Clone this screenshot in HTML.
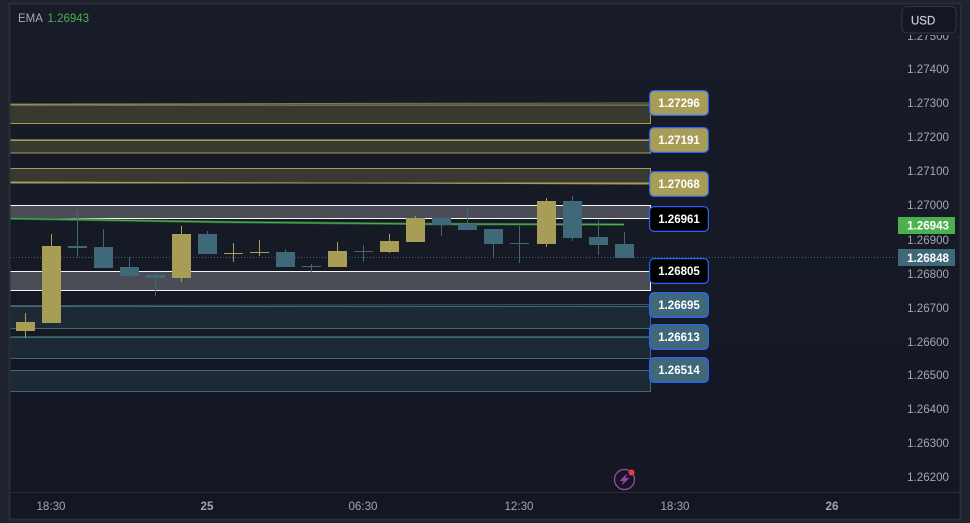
<!DOCTYPE html>
<html><head><meta charset="utf-8">
<style>
html,body{margin:0;padding:0;width:970px;height:523px;overflow:hidden;background:#1e232e}
svg{display:block}
text{font-family:"Liberation Sans",sans-serif}
</style></head><body>
<svg width="970" height="523" viewBox="0 0 970 523" xmlns="http://www.w3.org/2000/svg">
<defs><linearGradient id="bg" x1="0" y1="0" x2="0" y2="1"><stop offset="0" stop-color="#181c28"/><stop offset="1" stop-color="#131722"/></linearGradient></defs>
<rect width="970" height="523" fill="#1e232e"/>
<rect x="9.5" y="3.5" width="951" height="516" fill="url(#bg)"/>
<line x1="11" y1="492.5" x2="960" y2="492.5" stroke="#2a2e39"/>

<!-- yellow zones -->
<g fill="#383a32" stroke="#a89d57" stroke-width="1">
<rect x="4" y="105" width="646.5" height="18.5"/>
<rect x="4" y="140.5" width="646.5" height="12.5"/>
<rect x="4" y="168.5" width="646.5" height="14.5"/>
</g>
<line x1="10" y1="104" x2="650" y2="103" stroke="#7d7a55"/>
<line x1="10" y1="139.5" x2="650" y2="139.5" stroke="#6e6c50"/>
<line x1="10" y1="182" x2="650" y2="184" stroke="#a89d57"/>
<!-- white zones -->
<g fill="#4a4c56" stroke="#f4f4f4" stroke-width="1">
<rect x="4" y="205.5" width="646.5" height="13"/>
<rect x="4" y="271.5" width="646.5" height="19"/>
</g>
<!-- teal zones -->
<g fill="#1d2935" stroke="#3f6879" stroke-width="1">
<rect x="4" y="306.5" width="646.5" height="22"/>
<rect x="4" y="337.5" width="646.5" height="21"/>
<rect x="4" y="370.5" width="646.5" height="21"/>
</g>
<line x1="10" y1="305.5" x2="650" y2="304.5" stroke="#3a5a69"/>
<line x1="10" y1="336.5" x2="650" y2="336.5" stroke="#34505e"/>

<!-- dotted last price -->
<line x1="10" y1="257.5" x2="897" y2="257.5" stroke="#3f6879" stroke-width="1" stroke-dasharray="1 2"/>

<!-- EMA -->
<polyline points="10,218.5 220,222 430,224 624,224.5" fill="none" stroke="#2f6a33" stroke-width="2.4"/>
<polyline points="10,218.5 220,222 430,224 624,224.5" fill="none" stroke="#4caf50" stroke-width="1"/>

<!-- wicks -->
<g stroke="#a89d57" stroke-width="1">
<line x1="25.5" y1="313" x2="25.5" y2="338"/>
<line x1="51.5" y1="234" x2="51.5" y2="323"/>
<line x1="181.5" y1="226" x2="181.5" y2="282"/>
<line x1="233.5" y1="243" x2="233.5" y2="262"/>
<line x1="259.5" y1="240" x2="259.5" y2="256"/>
<line x1="337.5" y1="242" x2="337.5" y2="267"/>
<line x1="389.5" y1="234" x2="389.5" y2="253"/>
<line x1="415.5" y1="216" x2="415.5" y2="242"/>
<line x1="546.5" y1="198" x2="546.5" y2="247"/>
</g>
<g stroke="#3f6879" stroke-width="1">
<line x1="77.5" y1="211" x2="77.5" y2="257"/>
<line x1="103.5" y1="229" x2="103.5" y2="268"/>
<line x1="129.5" y1="257" x2="129.5" y2="278"/>
<line x1="155.5" y1="274" x2="155.5" y2="296"/>
<line x1="207.5" y1="231" x2="207.5" y2="254"/>
<line x1="285.5" y1="249" x2="285.5" y2="267"/>
<line x1="311.5" y1="264" x2="311.5" y2="272"/>
<line x1="363.5" y1="245" x2="363.5" y2="262"/>
<line x1="441.5" y1="216" x2="441.5" y2="236"/>
<line x1="467.5" y1="208" x2="467.5" y2="230"/>
<line x1="493.5" y1="229" x2="493.5" y2="258"/>
<line x1="519.5" y1="226" x2="519.5" y2="263"/>
<line x1="572.5" y1="196" x2="572.5" y2="241"/>
<line x1="598.5" y1="220" x2="598.5" y2="255"/>
<line x1="624.5" y1="232" x2="624.5" y2="258"/>
</g>
<!-- bodies -->
<g fill="#a89d57">
<rect x="16" y="322" width="19" height="9"/>
<rect x="42" y="246" width="19" height="77"/>
<rect x="172" y="234" width="19" height="44"/>
<rect x="224" y="253" width="19" height="1"/>
<rect x="250" y="252" width="19" height="1"/>
<rect x="328" y="251" width="19" height="16"/>
<rect x="380" y="241" width="19" height="11"/>
<rect x="406" y="218" width="19" height="24"/>
<rect x="537" y="201" width="19" height="43"/>
</g>
<g fill="#3f6879">
<rect x="68" y="246" width="19" height="2"/>
<rect x="94" y="247" width="19" height="21"/>
<rect x="120" y="267" width="19" height="9"/>
<rect x="146" y="275" width="19" height="3"/>
<rect x="198" y="234" width="19" height="20"/>
<rect x="276" y="252" width="19" height="15"/>
<rect x="302" y="266" width="19" height="1"/>
<rect x="354" y="251" width="19" height="1"/>
<rect x="432" y="218" width="19" height="7"/>
<rect x="458" y="224" width="19" height="6"/>
<rect x="484" y="229" width="19" height="15"/>
<rect x="510" y="243" width="19" height="1"/>
<rect x="563" y="201" width="19" height="37"/>
<rect x="589" y="237" width="19" height="8"/>
<rect x="615" y="244" width="19" height="14"/>
</g>

<!-- outer margin + frame above the zones -->
<rect x="0" y="0" width="9" height="523" fill="#1e232e"/>
<rect x="9.5" y="3.5" width="951" height="516" fill="none" stroke="#2a2e39" stroke-width="2"/>

<!-- level labels -->
<g stroke="#2962ff" stroke-width="1.2">
<rect x="649.6" y="90.6" width="58.8" height="24.8" rx="4.5" fill="#a89d57"/>
<rect x="649.6" y="127.6" width="58.8" height="24.8" rx="4.5" fill="#a89d57"/>
<rect x="649.6" y="171.6" width="58.8" height="24.8" rx="4.5" fill="#a89d57"/>
<rect x="649.6" y="206.6" width="58.8" height="24.8" rx="4.5" fill="#000"/>
<rect x="649.6" y="258.6" width="58.8" height="24.8" rx="4.5" fill="#000"/>
<rect x="649.6" y="292.6" width="58.8" height="24.8" rx="4.5" fill="#3f6879"/>
<rect x="649.6" y="324.6" width="58.8" height="24.8" rx="4.5" fill="#3f6879"/>
<rect x="649.6" y="357.6" width="58.8" height="24.8" rx="4.5" fill="#3f6879"/>
</g>
<g fill="#fff" font-size="11.5" font-weight="700" text-anchor="middle">
<text x="679" y="107">1.27296</text>
<text x="679" y="144">1.27191</text>
<text x="679" y="188">1.27068</text>
<text x="679" y="223">1.26961</text>
<text x="679" y="275">1.26805</text>
<text x="679" y="309">1.26695</text>
<text x="679" y="341">1.26613</text>
<text x="679" y="374">1.26514</text>
</g>

<!-- price axis -->
<g fill="#a3a6af" font-size="11.6" text-anchor="end">
<text x="949" y="40">1.27500</text>
<text x="949" y="73">1.27400</text>
<text x="949" y="107">1.27300</text>
<text x="949" y="141">1.27200</text>
<text x="949" y="175">1.27100</text>
<text x="949" y="209">1.27000</text>
<text x="949" y="244">1.26900</text>
<text x="949" y="278">1.26800</text>
<text x="949" y="312">1.26700</text>
<text x="949" y="346">1.26600</text>
<text x="949" y="379">1.26500</text>
<text x="949" y="413">1.26400</text>
<text x="949" y="447">1.26300</text>
<text x="949" y="481">1.26200</text>
</g>
<rect x="898" y="217" width="57" height="17" fill="#4caf50"/>
<text x="949" y="229.5" fill="#fff" font-size="11.6" font-weight="700" text-anchor="end">1.26943</text>
<rect x="898" y="249" width="57" height="17" fill="#3f6879"/>
<text x="949" y="262" fill="#fff" font-size="11.6" font-weight="700" text-anchor="end">1.26848</text>

<!-- USD -->
<rect x="895" y="5" width="65" height="30" fill="#171b26"/>
<rect x="902" y="6.5" width="54" height="26.5" rx="5" fill="#131722" stroke="#2e323d" stroke-width="1.2"/>
<text x="911" y="24.5" fill="#c9cbd2" stroke="#c9cbd2" stroke-width="0.2" font-size="11.5">USD</text>

<!-- legend -->
<text x="18" y="22" fill="#a8abb4" font-size="11.5">EMA</text>
<text x="47.5" y="22" fill="#4caf50" font-size="11.5">1.26943</text>

<!-- time axis -->
<g fill="#a3a6af" font-size="11.6" text-anchor="middle">
<text x="51" y="510">18:30</text>
<text x="207" y="510" font-weight="700">25</text>
<text x="363" y="510">06:30</text>
<text x="519" y="510">12:30</text>
<text x="675" y="510">18:30</text>
<text x="832" y="510" font-weight="700">26</text>
</g>

<!-- icon -->
<circle cx="624.5" cy="479.5" r="10" fill="none" stroke="#9b3fb0" stroke-width="1.4"/>
<path d="M627 473.5 L619.5 481 H623.5 L621.5 485.5 L629.5 478 H625.5 Z" fill="#9b3fb0"/>
<circle cx="631.5" cy="472.5" r="3" fill="#f23645"/>
</svg>
</body></html>
